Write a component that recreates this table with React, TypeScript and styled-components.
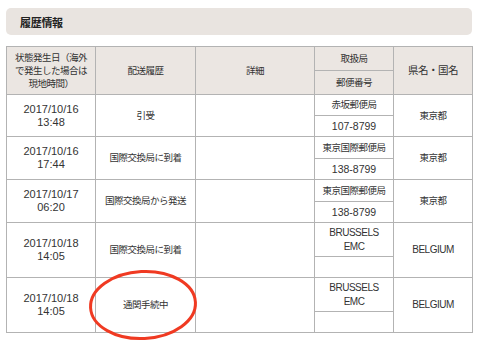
import React from "react";
import styled, { createGlobalStyle } from "styled-components";

const GlobalStyle = createGlobalStyle`
  html, body {
    margin: 0;
    padding: 0;
    background: #ffffff;
  }
  body {
    font-family: "Liberation Sans", "Noto Sans CJK JP", sans-serif;
    color: #333333;
  }
`;

type Kind = "date" | "jp" | "caps" | "num";
type Sub = { text: React.ReactNode; kind: Kind };

type HistoryRow = {
  date: string;
  time: string;
  status: string;
  office: Sub;
  zip: string;
  region: Sub;
  topH: number;
  bottomH: number;
};

const columns = [89, 100, 119, 79, 79];

const brussels = { text: <>BRUSSELS<br />EMC</>, kind: "caps" as Kind };
const belgium = { text: "BELGIUM", kind: "caps" as Kind };
const tokyo = { text: "東京都", kind: "jp" as Kind };

const rows: HistoryRow[] = [
  { date: "2017/10/16", time: "13:48", status: "引受", office: { text: "赤坂郵便局", kind: "jp" }, zip: "107-8799", region: tokyo, topH: 21, bottomH: 21 },
  { date: "2017/10/16", time: "17:44", status: "国際交換局に到着", office: { text: "東京国際郵便局", kind: "jp" }, zip: "138-8799", region: tokyo, topH: 22, bottomH: 21 },
  { date: "2017/10/17", time: "06:20", status: "国際交換局から発送", office: { text: "東京国際郵便局", kind: "jp" }, zip: "138-8799", region: tokyo, topH: 22, bottomH: 21 },
  { date: "2017/10/18", time: "14:05", status: "国際交換局に到着", office: brussels, zip: "", region: belgium, topH: 34, bottomH: 21 },
  { date: "2017/10/18", time: "14:05", status: "通関手続中", office: brussels, zip: "", region: belgium, topH: 34, bottomH: 21 },
];

export default function App() {
  return (
    <>
      <GlobalStyle />
      <Page>
        <TitleBar>
          <Title>履歴情報</Title>
        </TitleBar>
        <HistoryTable>
          <colgroup>
            {columns.map((w, i) => (
              <Col key={i} $w={w} />
            ))}
          </colgroup>
          <thead>
            <Row $h={24}>
              <HeadCell rowSpan={2}>状態発生日（海外<br />で発生した場合は<br />現地時間）</HeadCell>
              <HeadCell rowSpan={2}>配送履歴</HeadCell>
              <HeadCell rowSpan={2}>詳細</HeadCell>
              <HeadCell>取扱局</HeadCell>
              <HeadCell rowSpan={2} $big>県名・国名</HeadCell>
            </Row>
            <Row $h={24}>
              <HeadCell>郵便番号</HeadCell>
            </Row>
          </thead>
          <tbody>
            {rows.map((r, i) => (
              <React.Fragment key={i}>
                <Row $h={r.topH}>
                  <Cell rowSpan={2} $kind="date">{r.date}<br />{r.time}</Cell>
                  <Cell rowSpan={2} $kind="jp">{r.status}</Cell>
                  <Cell rowSpan={2} />
                  <Cell $kind={r.office.kind}>{r.office.text}</Cell>
                  <Cell rowSpan={2} $kind={r.region.kind}>{r.region.text}</Cell>
                </Row>
                <Row $h={r.bottomH}>
                  <Cell $kind="num">{r.zip}</Cell>
                </Row>
              </React.Fragment>
            ))}
          </tbody>
        </HistoryTable>
        <Circle width="116" height="76" viewBox="0 0 116 76">
          <ellipse cx="57" cy="37" rx="52.5" ry="33.5" fill="none" stroke="#f03a22" strokeWidth="3" transform="rotate(-3 57 37)" />
        </Circle>
      </Page>
    </>
  );
}

const Page = styled.div`
  position: relative;
  width: 480px;
  height: 343px;
  padding: 8px 8px 0 6px;
  box-sizing: border-box;
  display: flex;
  flex-direction: column;
  gap: 11px;
  overflow: hidden;
`;

const TitleBar = styled.div`
  height: 27px;
  background: #e9e4e0;
  border-radius: 5px;
  display: flex;
  align-items: center;
  padding-left: 14px;
`;

const Title = styled.h2`
  margin: 0;
  font-size: 11px;
  font-weight: bold;
  color: #222222;
  letter-spacing: -0.3px;
`;

const HistoryTable = styled.table`
  width: 466px;
  table-layout: fixed;
  border-collapse: collapse;
  border: 1px solid #a8a8a8;
`;

const Col = styled.col<{ $w: number }>`
  width: ${(p) => p.$w}px;
`;

const Row = styled.tr<{ $h: number }>`
  height: ${(p) => p.$h}px;
`;

const HeadCell = styled.th<{ $big?: boolean }>`
  background: #ebe6e2;
  border: 1px solid #b3b3b3;
  font-weight: normal;
  font-size: ${(p) => (p.$big ? "10.5px" : "9.5px")};
  letter-spacing: ${(p) => (p.$big ? "-0.5px" : "-0.5px")};
  line-height: 13px;
  color: #333333;
  text-align: center;
  vertical-align: middle;
  padding: 0;
`;

const sizes: Record<Kind, { size: string; spacing: string }> = {
  date: { size: "11px", spacing: "0" },
  jp: { size: "9.5px", spacing: "-0.5px" },
  caps: { size: "10px", spacing: "-0.5px" },
  num: { size: "10.5px", spacing: "0" },
};

const Cell = styled.td<{ $kind?: Kind }>`
  border: 1px solid #b3b3b3;
  font-size: ${(p) => sizes[p.$kind ?? "jp"].size};
  letter-spacing: ${(p) => sizes[p.$kind ?? "jp"].spacing};
  line-height: ${(p) => (p.$kind === "date" ? "13px" : "14px")};
  color: #333333;
  text-align: center;
  vertical-align: middle;
  padding: 0;
`;

const Circle = styled.svg`
  position: absolute;
  left: 86px;
  top: 268px;
  pointer-events: none;
`;
